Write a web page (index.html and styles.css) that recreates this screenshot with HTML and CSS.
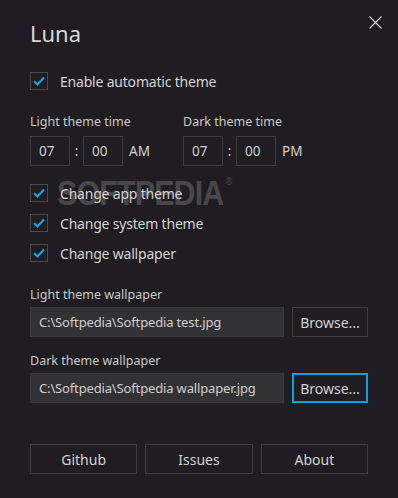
FILE: index.html
```html
<!DOCTYPE html>
<html lang="en">
<head>
    <meta charset="UTF-8">
    <meta name="viewport" content="width=device-width, initial-scale=1.0">
    <title>Luna</title>
    <link rel="stylesheet" href="styles.css">
</head>
<body>
    <div class="window">
        <div class="header">
            <h1 class="title">Luna</h1>
            <button class="close" aria-label="Close">
                <svg width="13" height="13" viewBox="0 0 13 13">
                    <path d="M0.5 0.5 L12.5 12.5 M12.5 0.5 L0.5 12.5" stroke="#cfcfcf" stroke-width="1.2" fill="none"/>
                </svg>
            </button>
        </div>

        <label class="check first">
            <span class="box"><svg width="12" height="10" viewBox="0 0 12 10"><path d="M1 5.2 L4.4 8.4 L11 1.4" stroke="#1aa1de" stroke-width="2.2" fill="none"/></svg></span>
            Enable automatic theme
        </label>

        <div class="times">
            <div class="time-group">
                <div class="label">Light theme time</div>
                <div class="time">
                    <span class="field">07</span>
                    <span class="colon">:</span>
                    <span class="field">00</span>
                    <span class="ampm">AM</span>
                </div>
            </div>
            <div class="time-group">
                <div class="label">Dark theme time</div>
                <div class="time">
                    <span class="field">07</span>
                    <span class="colon">:</span>
                    <span class="field">00</span>
                    <span class="ampm">PM</span>
                </div>
            </div>
        </div>

        <div class="checks">
            <!-- screenshot watermark, sits behind the labels -->
            <div class="watermark">SOFTPEDIA<span class="reg">®</span></div>
            <label class="check">
                <span class="box"><svg width="12" height="10" viewBox="0 0 12 10"><path d="M1 5.2 L4.4 8.4 L11 1.4" stroke="#1aa1de" stroke-width="2.2" fill="none"/></svg></span>
                Change app theme
            </label>
            <label class="check">
                <span class="box"><svg width="12" height="10" viewBox="0 0 12 10"><path d="M1 5.2 L4.4 8.4 L11 1.4" stroke="#1aa1de" stroke-width="2.2" fill="none"/></svg></span>
                Change system theme
            </label>
            <label class="check">
                <span class="box"><svg width="12" height="10" viewBox="0 0 12 10"><path d="M1 5.2 L4.4 8.4 L11 1.4" stroke="#1aa1de" stroke-width="2.2" fill="none"/></svg></span>
                Change wallpaper
            </label>
        </div>

        <div class="label wall-label">Light theme wallpaper</div>
        <div class="file-row">
            <div class="path">C:\Softpedia\Softpedia test.jpg</div>
            <button class="browse">Browse...</button>
        </div>

        <div class="label wall-label dark">Dark theme wallpaper</div>
        <div class="file-row">
            <div class="path">C:\Softpedia\Softpedia wallpaper.jpg</div>
            <button class="browse focused">Browse...</button>
        </div>

        <div class="footer">
            <button>Github</button>
            <button>Issues</button>
            <button>About</button>
        </div>
    </div>
</body>
</html>
```
FILE: styles.css
```css
body, html {
    margin: 0;
    padding: 0;
    height: 100%;
    background: #1f1d21;
    font-family: 'Noto Sans', 'Open Sans', sans-serif;
    color: #d2d2d2;
    overflow: hidden;
}

.window {
    padding: 16px 16px 0 30px;
}

.header {
    display: flex;
    justify-content: space-between;
    align-items: flex-start;
    height: 34px;
}

.title {
    margin: 0;
    font-size: 22px;
    font-weight: normal;
    line-height: 34px;
    color: #d8d8d8;
}

.close {
    background: none;
    border: none;
    padding: 0;
    width: 13px;
    height: 13px;
    display: flex;
}

.check {
    position: relative;
    display: flex;
    align-items: center;
    gap: 12px;
    height: 30px;
    font-size: 14px;
    letter-spacing: -0.2px;
    color: #d4d4d4;
}

.check.first {
    margin-top: 16px;
}

.box {
    width: 16px;
    height: 16px;
    border: 1px solid #4a4a4c;
    display: flex;
    align-items: center;
    justify-content: center;
    flex-shrink: 0;
}

.label {
    font-size: 12.5px;
    line-height: 18px;
    color: #c9c9c9;
}

.times {
    display: flex;
    margin-top: 17px;
}

.time-group {
    width: 153px;
}

.time {
    display: flex;
    align-items: center;
    margin-top: 5px;
    font-size: 13.5px;
}

.field {
    width: 30px;
    height: 28px;
    line-height: 28px;
    padding-left: 8px;
    border: 1px solid #3b3b3d;
}

.colon {
    width: 13px;
    text-align: center;
}

.ampm {
    margin-left: 6px;
}

.checks {
    position: relative;
    margin-top: 12px;
}

.watermark {
    position: absolute;
    left: 27px;
    top: 0;
    font-family: 'Liberation Sans', sans-serif;
    font-weight: bold;
    font-size: 35px;
    line-height: 30px;
    letter-spacing: -1px;
    color: #48474a;
    transform: scaleX(0.87);
    transform-origin: left top;
    pointer-events: none;
    white-space: nowrap;
}

.watermark .reg {
    position: absolute;
    right: -10px;
    top: -1px;
    font-size: 10px;
    line-height: 10px;
    font-weight: normal;
    letter-spacing: 0;
}

.wall-label {
    margin-top: 18px;
}

.wall-label.dark {
    margin-top: 15px;
}

.file-row {
    display: flex;
    gap: 8px;
    margin-top: 3px;
    width: 338px;
}

.path {
    flex: 1;
    height: 28px;
    line-height: 28px;
    padding-left: 8px;
    font-size: 13px;
    letter-spacing: -0.15px;
    background: #323234;
    border: 1px solid #3a3a3c;
    color: #cfcfcf;
}

button {
    font-family: inherit;
    color: #d2d2d2;
    cursor: pointer;
}

.browse {
    width: 76px;
    height: 30px;
    font-size: 14px;
    background: #1f1d21;
    border: 1px solid #3e3e40;
    padding: 0;
}

.browse.focused {
    border: 2px solid #0ea0dc;
}

.footer {
    display: flex;
    gap: 8px;
    margin-top: 41px;
    width: 338px;
}

.footer button {
    flex: 1;
    height: 30px;
    font-size: 14px;
    background: #1f1d21;
    border: 1px solid #3e3e40;
    padding: 0;
}
```
